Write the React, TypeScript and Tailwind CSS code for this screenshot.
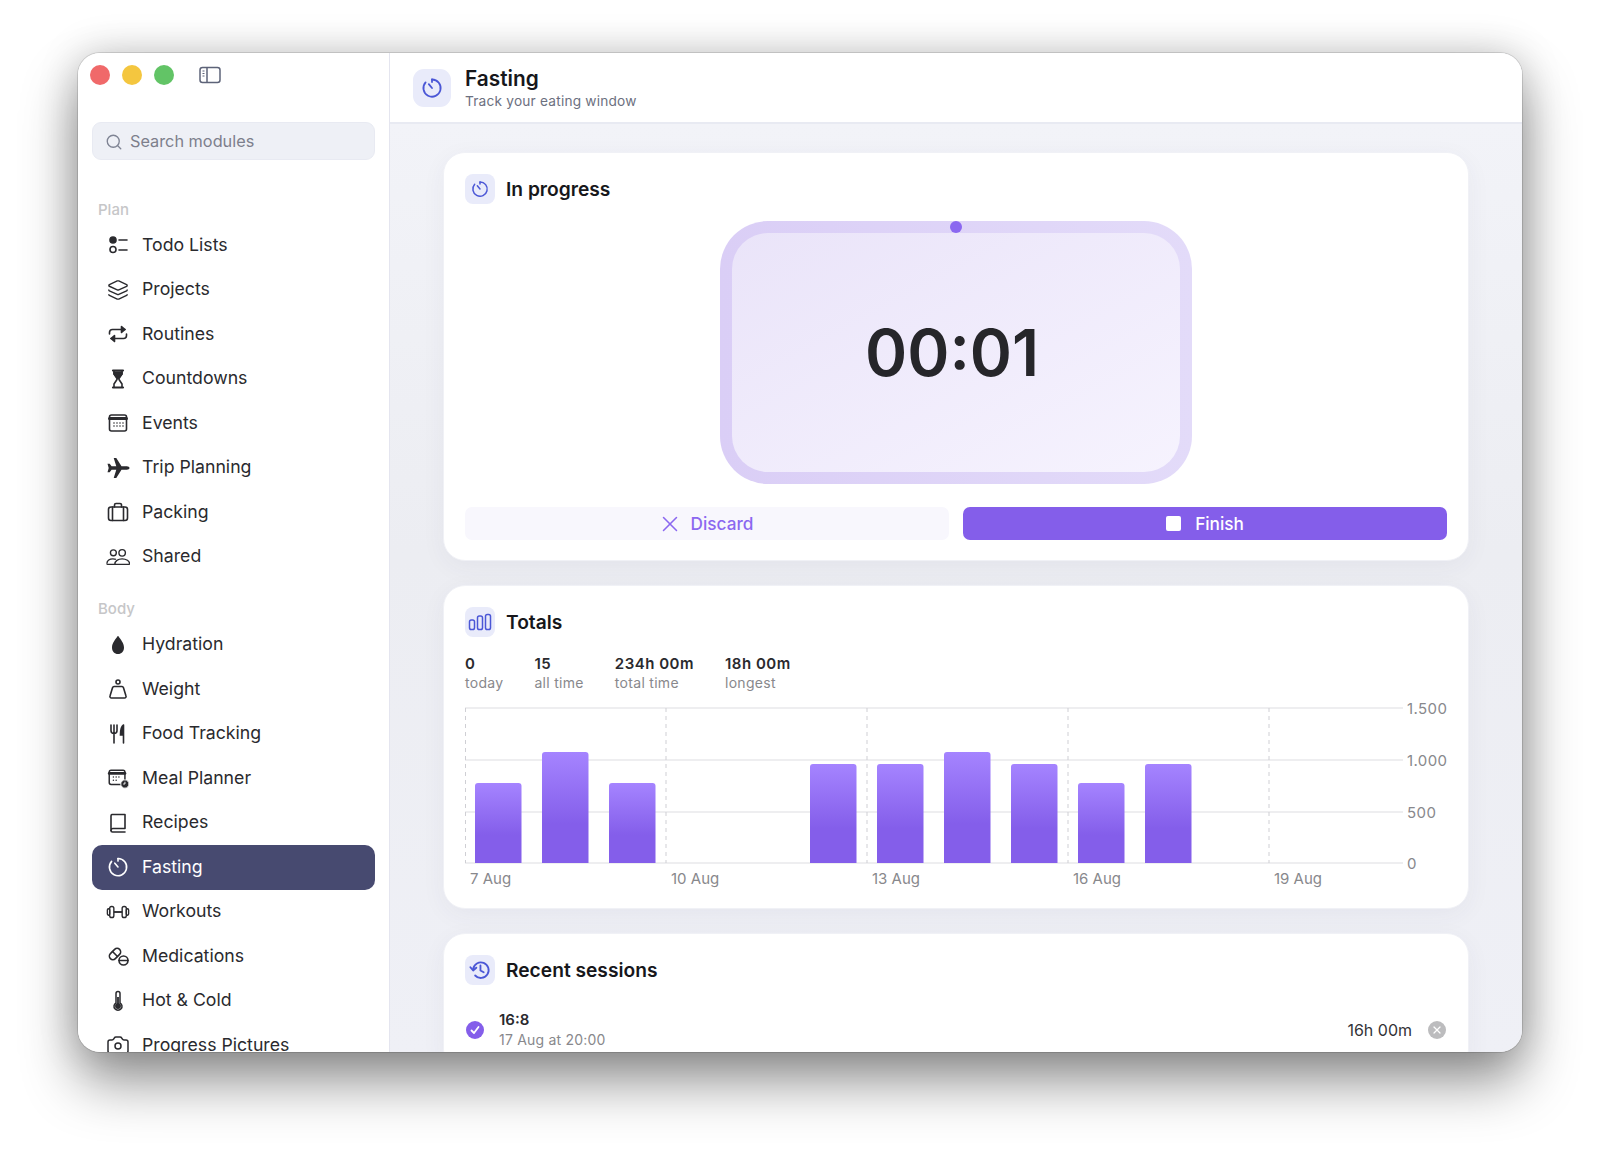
import type { ReactNode } from "react";
import { Camera, Layers, Search, X } from "lucide-react";

const Ico = ({ children, size = 24 }: { children: ReactNode; size?: number }) => (
  <svg width={size} height={size} viewBox="0 0 24 24" fill="none" stroke="currentColor" strokeWidth="1.6" strokeLinecap="round" strokeLinejoin="round">
    {children}
  </svg>
);

const TimerIcon = ({ size = 24, sw = 1.8 }: { size?: number; sw?: number }) => (
  <svg width={size} height={size} viewBox="0 0 24 24" fill="none" stroke="currentColor" strokeWidth={sw} strokeLinecap="round">
    <path d="M12 3.500a8.600 8.600 0 1 1-6.400 2.900" />
    <path d="M12 12 8.800 8.200" />
    <path d="M12 3.500v2.600" />
  </svg>
);

const icons: Record<string, ReactNode> = {
  todo: (
    <Ico>
      <circle cx="7" cy="7" r="3" fill="currentColor" />
      <circle cx="7" cy="16.500" r="3" />
      <path d="M13 7h8M13 17h8" />
    </Ico>
  ),
  projects: <Layers size={22} strokeWidth={1.5} />,
  routines: (
    <Ico>
      <path d="M3.500 12V10.500a3 3 0 0 1 3-3H19" />
      <path d="M20.500 12v1.500a3 3 0 0 1-3 3H5" />
      <path d="M15.500 4.500 19 7.500l-3.500 3z" fill="currentColor" />
      <path d="M8.500 13.500 5 16.500l3.500 3z" fill="currentColor" />
    </Ico>
  ),
  countdowns: (
    <Ico>
      <path d="M7 3.500h10M7 20.500h10" strokeWidth="2.200" />
      <path d="M8 4v3l3 4.500v1L8 17v3M16 4v3l-3 4.500v1L16 17v3" />
      <path d="M8 5h8v2l-4 4.500L8 7z" fill="currentColor" />
    </Ico>
  ),
  events: (
    <Ico>
      <rect x="3.500" y="4" width="17" height="16" rx="2" />
      <path d="M3.500 7.500h17" strokeWidth="3" />
      <path d="M8 12h.01M11 12h.01M14 12h.01M17 12h.01M8 15h.01M11 15h.01M14 15h.01M17 15h.01" />
    </Ico>
  ),
  trip: (
    <svg width="24" height="24" viewBox="0 0 24 24" fill="currentColor">
      <path d="M23.500 12c0-1-1.200-1.700-2.700-1.700h-5.300L10.300 2H7.700l2.600 8.300H5.600L3.700 7.800H1.500L2.700 12 1.500 16.200h2.200l1.900-2.500h4.700L7.700 22h2.600l5.200-8.300h5.300c1.500 0 2.700-.7 2.700-1.700z" />
    </svg>
  ),
  packing: (
    <Ico>
      <rect x="2.500" y="7" width="19" height="13.500" rx="2.500" />
      <path d="M8.500 7V5a1.500 1.500 0 0 1 1.500-1.500h4A1.500 1.500 0 0 1 15.500 5v2M6.500 7v13.500M17.500 7v13.500" />
    </Ico>
  ),
  shared: (
    <svg width="26" height="24" viewBox="0 0 26 24" fill="none" stroke="currentColor" strokeWidth="1.500">
      <circle cx="8" cy="7.500" r="3.200" />
      <circle cx="17.500" cy="7.500" r="3.500" />
      <path d="M1 19c0-3.200 3-5 6.500-5 1.200 0 2.300.2 3.200.6" />
      <path d="M9.500 20c0-3.500 3.500-6 8-6s8 2.500 8 5c0 .7-.5 1-1.200 1z" />
      <path d="M1 19c0 .6.400 1 1 1h7.500" />
    </svg>
  ),
  hydration: (
    <svg width="24" height="24" viewBox="0 0 24 24" fill="currentColor">
      <path d="M12 3c-.3 0-.5.200-.7.500C9.500 6.500 6 10 6 14.500 6 18.500 8.500 21 12 21s6-2.500 6-6.500C18 10 14.500 6.500 12.700 3.500 12.500 3.200 12.300 3 12 3z" />
    </svg>
  ),
  weight: (
    <Ico>
      <circle cx="12" cy="5" r="2" />
      <path d="M8 9.500h8a1.500 1.500 0 0 1 1.400 1L20 19a1.500 1.500 0 0 1-1.400 2H5.400A1.500 1.500 0 0 1 4 19l2.600-8.500a1.500 1.500 0 0 1 1.400-1z" />
    </Ico>
  ),
  food: (
    <svg width="24" height="24" viewBox="0 0 24 24" fill="currentColor" stroke="currentColor" strokeWidth="1.600" strokeLinecap="round">
      <path d="M5 3v5.500a3 3 0 0 0 6 0V3M8 3v18" fill="none" />
      <path d="M17.500 3C15 4.500 14.500 9 14.500 13h3M17.500 3v18" />
    </svg>
  ),
  meal: (
    <svg width="26" height="24" viewBox="0 0 26 24" fill="none" stroke="currentColor" strokeWidth="1.600" strokeLinecap="round">
      <rect x="3.500" y="3.500" width="17" height="15.500" rx="2" />
      <path d="M3.500 7h17" strokeWidth="3" />
      <path d="M8 11h.01M11 11h.01M14 11h.01M8 14.500h.01M11 14.500h.01" />
      <circle cx="20.500" cy="18.500" r="4.500" fill="currentColor" stroke="#fff" strokeWidth="1" />
      <path d="M20.500 16.500v2h-1.500" stroke="#fff" strokeWidth="1" />
    </svg>
  ),
  recipes: (
    <Ico>
      <path d="M6 3.500h13v14H7a2 2 0 0 0-2 2V5a1.500 1.500 0 0 1 1-1.500z" />
      <path d="M5 19.500a1.500 1.500 0 0 0 1.500 1.500H19" />
    </Ico>
  ),
  fasting: <TimerIcon sw={1.6} />,
  workouts: (
    <svg width="26" height="24" viewBox="0 0 26 24" fill="none" stroke="currentColor" strokeWidth="1.500">
      <rect x="4" y="6" width="4.500" height="12" rx="2" />
      <rect x="17.500" y="6" width="4.500" height="12" rx="2" />
      <rect x="1.500" y="8.500" width="2.500" height="7" rx="1.200" />
      <rect x="22" y="8.500" width="2.500" height="7" rx="1.200" />
      <path d="M8.500 12h9" strokeWidth="2" />
    </svg>
  ),
  medications: (
    <Ico>
      <g transform="rotate(-45 9 10)">
        <rect x="2.500" y="6.500" width="13" height="7" rx="3.500" />
        <path d="M9 6.500v7" />
      </g>
      <circle cx="17.500" cy="16.500" r="4.500" />
      <path d="M13 16.500h9" />
    </Ico>
  ),
  hotcold: (
    <svg width="24" height="24" viewBox="0 0 24 24" fill="none" stroke="currentColor" strokeWidth="1.500">
      <path d="M10 4.500a2 2 0 0 1 4 0v9.300a4 4 0 1 1-4 0z" />
      <circle cx="12" cy="17" r="2.200" fill="currentColor" />
      <path d="M12 8v8" strokeWidth="1.800" />
    </svg>
  ),
  pictures: <Camera size={24} strokeWidth={1.5} />,
};

const plan = [
  ["todo", "Todo Lists"],
  ["projects", "Projects"],
  ["routines", "Routines"],
  ["countdowns", "Countdowns"],
  ["events", "Events"],
  ["trip", "Trip Planning"],
  ["packing", "Packing"],
  ["shared", "Shared"],
];

const body = [
  ["hydration", "Hydration"],
  ["weight", "Weight"],
  ["food", "Food Tracking"],
  ["meal", "Meal Planner"],
  ["recipes", "Recipes"],
  ["fasting", "Fasting"],
  ["workouts", "Workouts"],
  ["medications", "Medications"],
  ["hotcold", "Hot & Cold"],
  ["pictures", "Progress Pictures"],
];

const NavRow = ({ icon, label, active }: { icon: string; label: string; active?: boolean }) => (
  <div
    className={
      active
        ? "flex h-[44.5px] shrink-0 items-center gap-[12px] rounded-[10px] bg-[#474a70] pl-[14px] text-[17.7px] text-white"
        : "flex h-[44.5px] shrink-0 items-center gap-[12px] pl-[14px] text-[17.7px] text-[#2a2a2e]"
    }
  >
    <span className="flex w-[24px] justify-center">{icons[icon]}</span>
    <span>{label}</span>
  </div>
);

const Sidebar = () => (
  <aside className="flex h-full w-[312px] shrink-0 flex-col overflow-hidden border-r border-[#e4e5ef] bg-white px-[14px]">
    <div className="-ml-[2px] flex h-[43px] shrink-0 items-center gap-[12px]">
      <span className="h-[20px] w-[20px] rounded-full bg-[#f0696a]" />
      <span className="h-[20px] w-[20px] rounded-full bg-[#f4c63f]" />
      <span className="h-[20px] w-[20px] rounded-full bg-[#62c466]" />
      <svg className="ml-[13px]" width="22" height="18" viewBox="0 0 22 18" fill="none" stroke="#5d6378" strokeWidth="1.500">
        <rect x="1" y="1.500" width="20" height="15" rx="2.500" />
        <path d="M8 1.500v15" />
        <path d="M3.500 5h2M3.500 7.500h2M3.500 10h2" strokeWidth="1" />
      </svg>
    </div>
    <div className="mt-[26px] flex h-[38px] shrink-0 items-center gap-[7px] rounded-[9px] border border-[#e8eaf2] bg-[#eef0f6] pt-[1px] pl-[12px] text-[16.3px] text-[#7d7f8c]">
      <Search size={18} strokeWidth={1.8} className="text-[#7f8494]" />
      <span>Search modules</span>
    </div>
    <div className="mt-[39px] shrink-0 pl-[6px] text-[15px] leading-[22px] font-medium text-[#c6c6c8]">Plan</div>
    <div className="mt-[2px] flex shrink-0 flex-col">
      {plan.map(([icon, label]) => (
        <NavRow key={label} icon={icon} label={label} />
      ))}
    </div>
    <div className="mt-[19px] shrink-0 pl-[6px] text-[15px] leading-[22px] font-medium text-[#c6c6c8]">Body</div>
    <div className="mt-[2.5px] flex shrink-0 flex-col">
      {body.map(([icon, label]) => (
        <NavRow key={label} icon={icon} label={label} active={label === "Fasting"} />
      ))}
    </div>
  </aside>
);

const Card = ({ children }: { children: ReactNode }) => (
  <section className="shrink-0 rounded-[22px] border border-[#f0f1f6] bg-white px-[21px] pt-[21px] pb-[20px] shadow-[0_6px_24px_rgba(60,60,90,0.05)]">
    {children}
  </section>
);

const CardHead = ({ icon, title }: { icon: ReactNode; title: string }) => (
  <div className="flex items-center gap-[11px]">
    <span className="flex h-[30px] w-[30px] items-center justify-center rounded-[8px] bg-[#e9ebfa] text-[#4b57d6]">{icon}</span>
    <h2 className="text-[19.2px] leading-[30px] font-semibold text-[#17171b]">{title}</h2>
  </div>
);

const stats = [
  ["0", "today"],
  ["15", "all time"],
  ["234h 00m", "total time"],
  ["18h 00m", "longest"],
];

const Chart = () => {
  const lefts = [475, 542, 609, 810, 877, 944, 1011, 1078, 1145];
  const tops = [783, 752, 783, 764, 764, 752, 764, 783, 764];
  return (
    <svg className="mt-[7px] block" width="982" height="189" viewBox="465 699 982 189" fontFamily="Inter, sans-serif" fontSize="15" fill="#88888c">
      <defs>
        <linearGradient id="bar" x1="0" y1="0" x2="0" y2="1">
          <stop offset="0" stopColor="#a584ff" />
          <stop offset="0.65" stopColor="#845eea" />
          <stop offset="1" stopColor="#845eea" />
        </linearGradient>
      </defs>
      {[708, 760, 812, 863].map((y) => (
        <line key={y} x1="465" x2="1403" y1={y} y2={y} stroke="#dedee2" strokeWidth="1.200" />
      ))}
      {[465.500, 666, 867, 1068, 1269].map((x) => (
        <line key={x} x1={x} x2={x} y1="708" y2="863" stroke="#cfcfd4" strokeWidth="1" strokeDasharray="4 4" />
      ))}
      {lefts.map((x, i) => (
        <path key={x} d={`M${x} 863V${tops[i] + 3}q0-3 3-3h40.500q3 0 3 3V863z`} fill="url(#bar)" />
      ))}
      {[
        [470, "7 Aug"],
        [671, "10 Aug"],
        [872, "13 Aug"],
        [1073, "16 Aug"],
        [1274, "19 Aug"],
      ].map(([x, t]) => (
        <text key={t} x={x} y="884">{t}</text>
      ))}
      {[
        [714, "1.500"],
        [766, "1.000"],
        [818, "500"],
        [869, "0"],
      ].map(([y, t]) => (
        <text key={t} x="1407" y={y} letterSpacing="0.4">{t}</text>
      ))}
    </svg>
  );
};

export default function App() {
  return (
    <div className="h-[1155px] w-[1600px] overflow-hidden bg-white pt-[53px] pl-[78px] [font-family:Inter,sans-serif]">
      <div className="flex h-[999px] w-[1444px] overflow-hidden rounded-[22px] shadow-[0_0_0_1px_rgba(0,0,0,0.12),0_30px_55px_rgba(0,0,0,0.42),0_0_40px_rgba(0,0,0,0.18)]">
        <Sidebar />
        <main className="flex min-w-0 flex-1 flex-col bg-gradient-to-b from-[#f3f4f9] via-[#ecedf2] to-[#eff0f6]">
          <header className="flex h-[71px] shrink-0 items-center gap-[14px] border-b-2 border-[#e8eaf2] bg-white pl-[23px]">
            <span className="flex h-[38px] w-[38px] items-center justify-center rounded-[11px] bg-[#e9ebfa] text-[#4b57d6]">
              <TimerIcon />
            </span>
            <div className="flex flex-col pt-[2px]">
              <h1 className="text-[20.8px] leading-[26px] font-semibold text-[#17171b]">Fasting</h1>
              <p className="text-[13.7px] leading-[19px] tracking-[0.2px] text-[#6c7080]">Track your eating window</p>
            </div>
          </header>
          <div className="flex min-h-0 flex-1 flex-col gap-[24px] overflow-hidden pt-[28px] pr-[53px] pl-[53px]">
            <Card>
              <CardHead icon={<TimerIcon size={20} />} title="In progress" />
              <div className="relative mx-auto mt-[17px] h-[263px] w-[472px] rounded-[48px] bg-gradient-to-r from-[#dacef6] to-[#e3dbf9] p-[12px]">
                <div className="flex h-full items-center justify-center rounded-[36px] bg-gradient-to-br from-[#eae4f9] to-[#f6f3fe] pr-[8px]">
                  <span className="text-[64px] font-semibold text-[#26262a]">00:01</span>
                </div>
                <span className="absolute top-0 left-[230px] h-[12px] w-[12px] rounded-full bg-[#8b68f0]" />
              </div>
              <div className="mt-[23px] grid grid-cols-2 gap-[14px]">
                <div className="flex h-[33px] items-center justify-center gap-[8px] rounded-[7px] bg-[#f8f7fd] pr-[4px] text-[17.2px] font-medium text-[#8b68f0]">
                  <X size={26} strokeWidth={1.4} />
                  <span>Discard</span>
                </div>
                <div className="flex h-[33px] items-center justify-center gap-[14px] rounded-[7px] bg-[#845eea] text-[17.2px] font-medium text-white">
                  <span className="h-[15px] w-[15px] rounded-[2px] bg-white" />
                  <span>Finish</span>
                </div>
              </div>
            </Card>
            <Card>
              <CardHead
                icon={
                  <svg width="24" height="20" viewBox="0 0 24 20" fill="none" stroke="currentColor" strokeWidth="1.500">
                    <rect x="1.500" y="8" width="5" height="9.500" rx="1.800" />
                    <rect x="9.500" y="4" width="5" height="13.500" rx="1.800" />
                    <rect x="17.500" y="2.500" width="5" height="15" rx="1.800" />
                  </svg>
                }
                title="Totals"
              />
              <div className="mt-[17px] flex gap-[31px]">
                {stats.map(([v, l]) => (
                  <div key={l} className="flex flex-col">
                    <span className="text-[15px] leading-[20px] font-semibold tracking-[0.5px] text-[#2a2a2e]">{v}</span>
                    <span className="text-[14px] leading-[18px] tracking-[0.3px] text-[#88888c]">{l}</span>
                  </div>
                ))}
              </div>
              <Chart />
            </Card>
            <Card>
              <CardHead
                icon={
                  <svg width="22" height="22" viewBox="0 0 24 24" fill="none" stroke="currentColor" strokeWidth="2" strokeLinecap="round" strokeLinejoin="round">
                    <path d="M4.500 11a8.500 8.500 0 1 1 2.200 7" />
                    <path d="M1.500 9l3 3.500L8 9.500" />
                    <path d="M12.500 7v5.500l3.500 2" />
                  </svg>
                }
                title="Recent sessions"
              />
              <div className="mt-[25px] flex items-center">
                <span className="ml-[1px] flex h-[18px] w-[18px] items-center justify-center rounded-full bg-[#845eea]">
                  <svg width="12" height="12" viewBox="0 0 12 12" fill="none" stroke="#fff" strokeWidth="1.800" strokeLinecap="round" strokeLinejoin="round">
                    <path d="M2.500 6.500 5 9l4.500-6" />
                  </svg>
                </span>
                <div className="ml-[15px] flex flex-col">
                  <span className="text-[15px] leading-[20px] font-semibold text-[#2a2a2e]">16:8</span>
                  <span className="text-[14px] leading-[20px] tracking-[0.2px] text-[#88888c]">17 Aug at 20:00</span>
                </div>
                <span className="ml-auto text-[16px] text-[#333337]">16h 00m</span>
                <span className="mr-[1px] ml-[16px] flex h-[18px] w-[18px] items-center justify-center rounded-full bg-[#bcbcbe] text-white">
                  <X size={12} strokeWidth={2.4} />
                </span>
              </div>
            </Card>
          </div>
        </main>
      </div>
    </div>
  );
}
